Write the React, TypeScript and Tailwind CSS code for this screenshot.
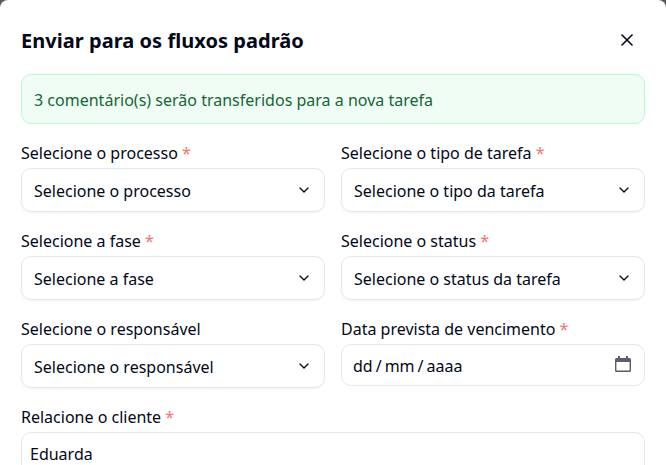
import React from "react";
import { ChevronDown, X } from "lucide-react";

function Label({ text, required }: { text: string; required?: boolean }) {
  return (
    <label className="block h-6 leading-6 whitespace-nowrap">
      {text}
      {required && <span className="text-[#f87171]"> *</span>}
    </label>
  );
}

function SelectField({ label, value, required }: { label: string; value: string; required?: boolean }) {
  return (
    <div className="flex h-[72px] flex-col">
      <Label text={label} required={required} />
      <button className="mt-[3px] flex h-11 shrink-0 items-center justify-between rounded-[10px] border border-[#e2e8f0] px-3 text-left shadow-xs">
        <span className="pt-0.5 whitespace-nowrap">{value}</span>
        <ChevronDown size={16} strokeWidth={2} />
      </button>
    </div>
  );
}

function CalendarIcon() {
  return (
    <svg width="16" height="16" viewBox="0 0 16 16" fill="#5a5d6b" fillRule="evenodd">
      <path d="M3 0h2v2h6V0h2v2h1.500A1.500 1.500 0 0 1 16 3.500v11a1.500 1.500 0 0 1-1.500 1.500h-13A1.500 1.500 0 0 1 0 14.500v-11A1.500 1.500 0 0 1 1.500 2H3zM1.400 6v8.600h13.200V6z" />
    </svg>
  );
}

export default function App() {
  return (
    <div className="h-[465px] overflow-hidden bg-[#5a5a5a] font-['Noto_Sans',sans-serif] text-base text-[#020817]">
      <div className="h-[500px] rounded-t-lg bg-white px-[21px] pt-[27px]">
        <header className="flex h-7 items-center justify-between pr-2">
          <h2 className="text-xl leading-7 font-bold tracking-[0.04px] whitespace-nowrap">Enviar para os fluxos padrão</h2>
          <X size={20} strokeWidth={2} className="relative -top-px" />
        </header>
        <div className="mt-[19px] flex h-[50px] items-center rounded-[10px] border border-[#bbf7d0] bg-[#f0fdf4] px-3 pt-0.5 tracking-[0.01px] text-[#166534]">
          3 comentário(s) serão transferidos para a nova tarefa
        </div>
        <div className="mt-[17px] grid grid-cols-2 gap-4">
          <SelectField label="Selecione o processo" value="Selecione o processo" required />
          <SelectField label="Selecione o tipo de tarefa" value="Selecione o tipo da tarefa" required />
          <SelectField label="Selecione a fase" value="Selecione a fase" required />
          <SelectField label="Selecione o status" value="Selecione o status da tarefa" required />
          <SelectField label="Selecione o responsável" value="Selecione o responsável" />
          <div className="flex h-[72px] flex-col">
            <Label text="Data prevista de vencimento" required />
            <div className="mt-[3px] flex h-[42px] shrink-0 items-center justify-between rounded-[10px] border border-[#e2e8f0] pr-[13px] pl-[11px]">
              <div className="flex items-center gap-[3px] pt-0.5">
                <span>dd</span><span>/</span><span>mm</span><span>/</span><span>aaaa</span>
              </div>
              <div className="pb-0.5">
                <CalendarIcon />
              </div>
            </div>
          </div>
        </div>
        <div className="mt-4">
          <Label text="Relacione o cliente" required />
          <div className="mt-[3px] flex h-[44px] items-center rounded-[10px] border border-[#e2e8f0] px-2">Eduarda</div>
        </div>
      </div>
    </div>
  );
}
